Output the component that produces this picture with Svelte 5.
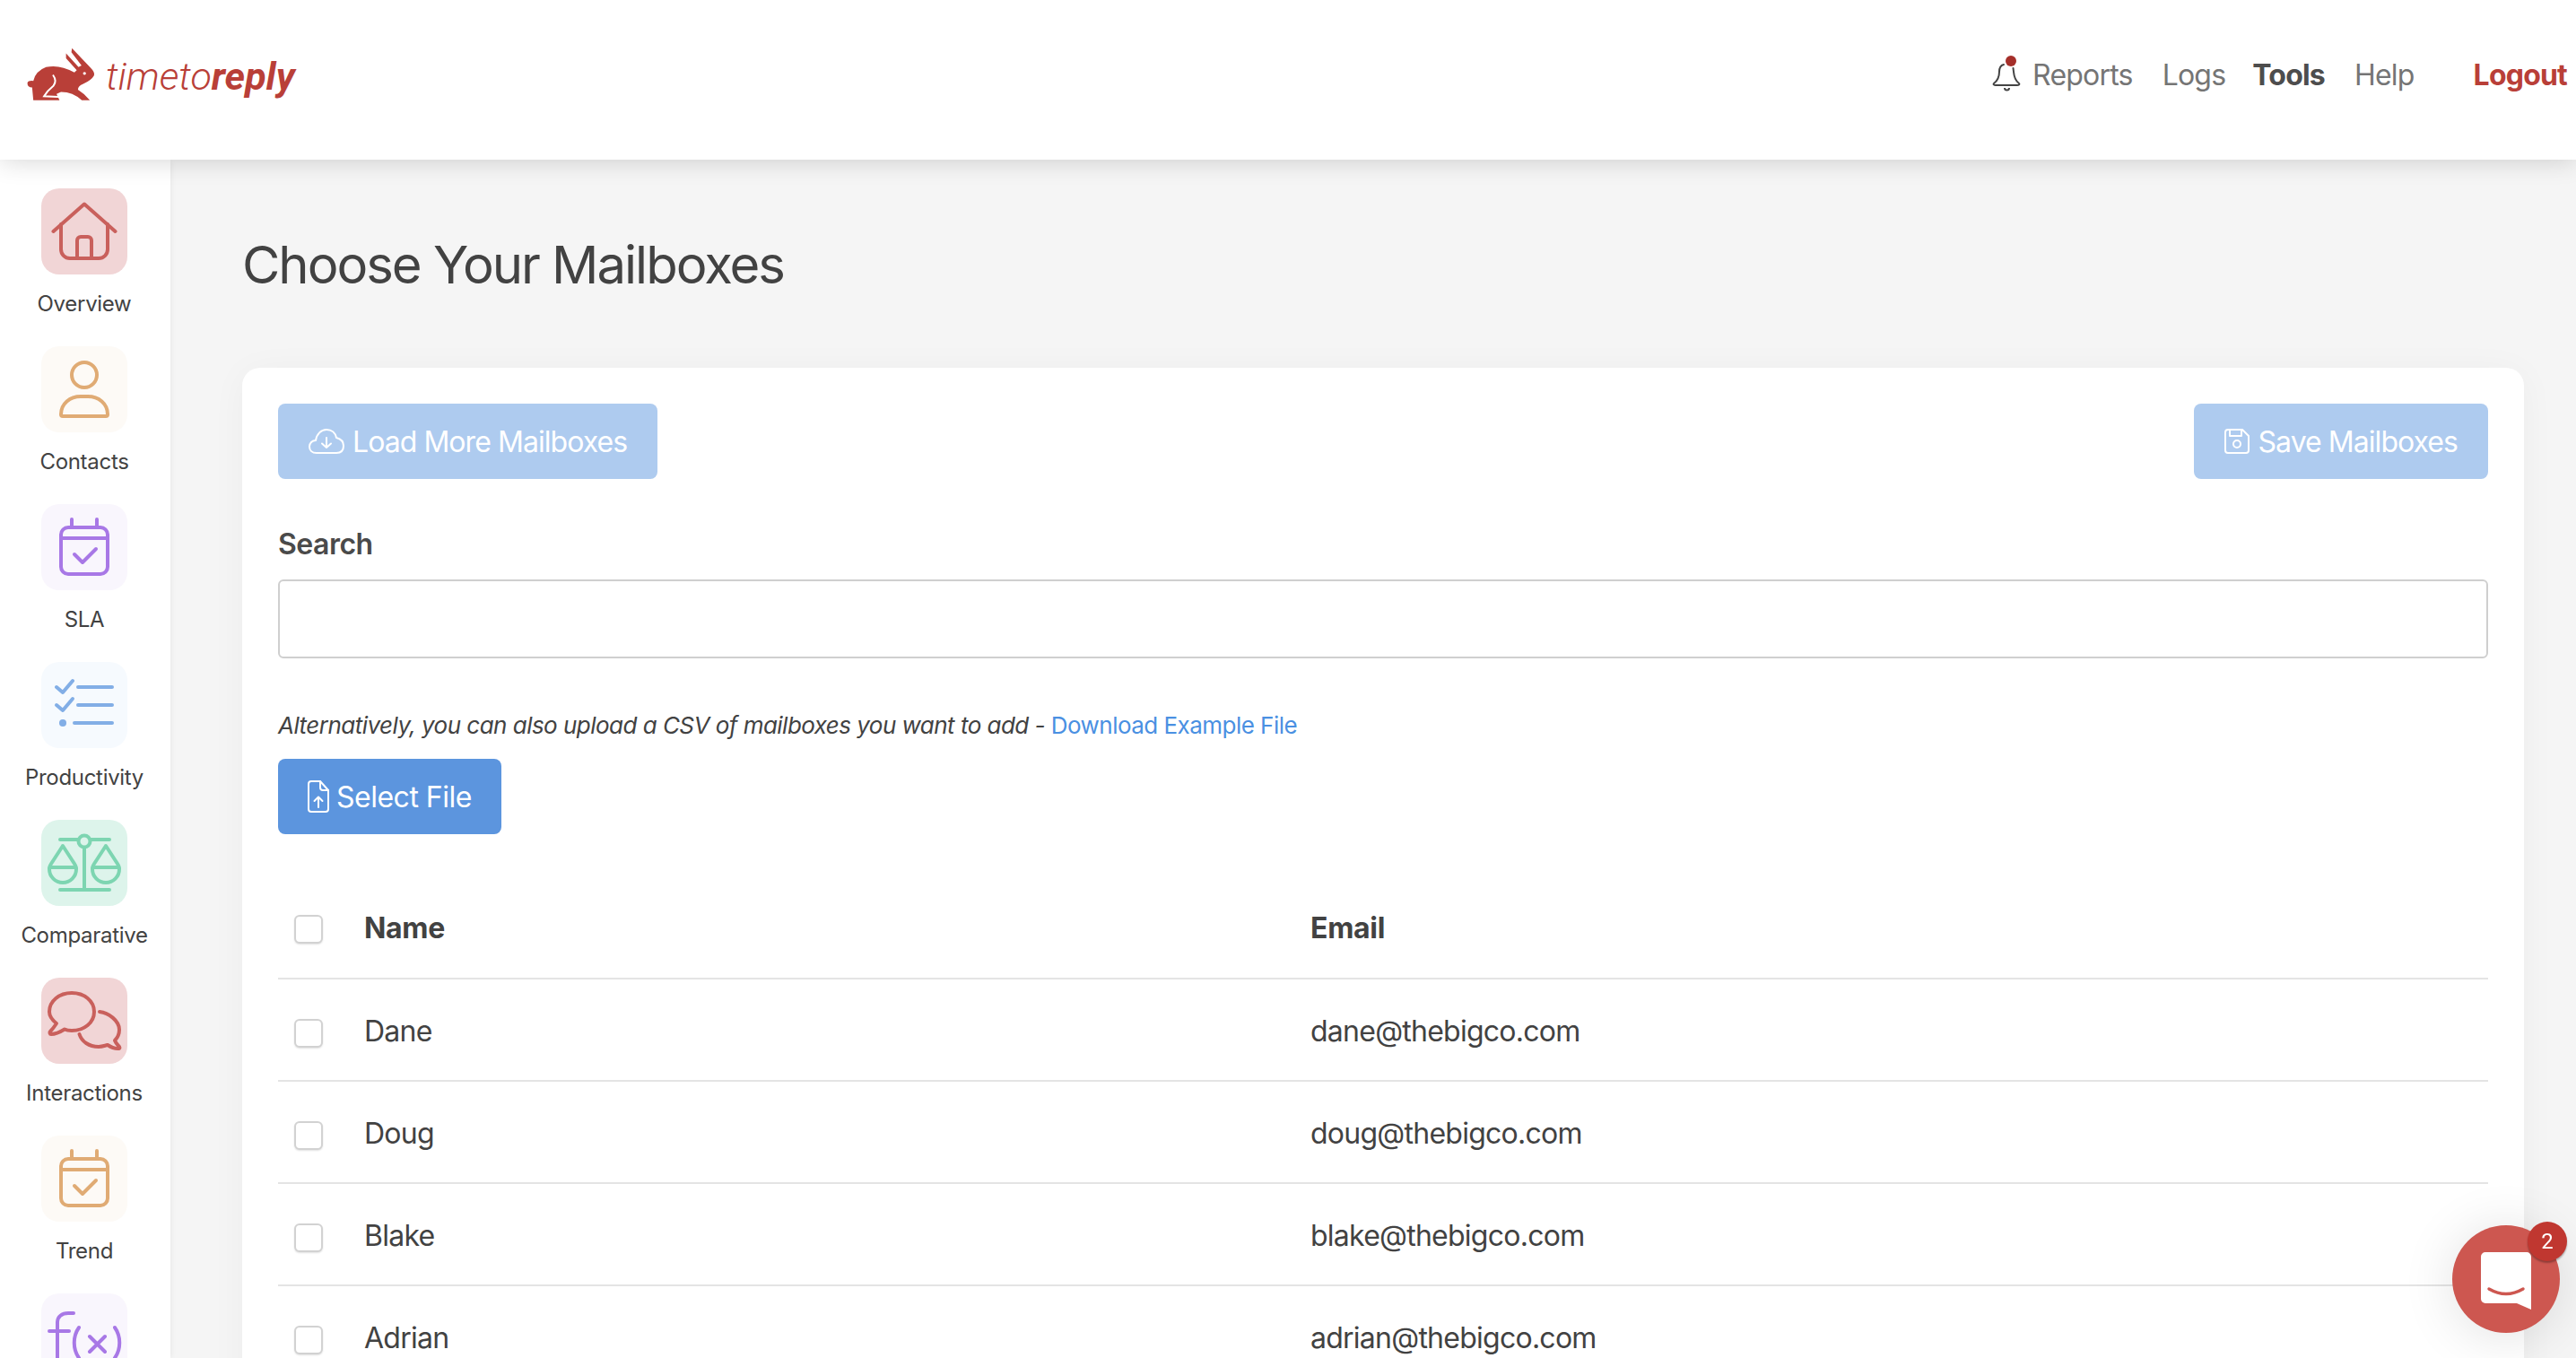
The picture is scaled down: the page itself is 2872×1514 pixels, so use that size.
<script>
	const sideItems = [
		{ label: "Overview", icon: "home", tone: "red" },
		{ label: "Contacts", icon: "person", tone: "orange" },
		{ label: "SLA", icon: "calendar", tone: "purple" },
		{ label: "Productivity", icon: "list", tone: "blue" },
		{ label: "Comparative", icon: "scale", tone: "green" },
		{ label: "Interactions", icon: "chat", tone: "red" },
		{ label: "Trend", icon: "calendar", tone: "orange" },
		// label of this one sits below the fold
		{ label: "", icon: "fx", tone: "purple" },
	];

	const mailboxes = [
		{ name: "Dane", email: "dane@thebigco.com" },
		{ name: "Doug", email: "doug@thebigco.com" },
		{ name: "Blake", email: "blake@thebigco.com" },
		{ name: "Adrian", email: "adrian@thebigco.com" },
	];
</script>

<div class="shell">
	<header class="topbar">
		<a class="logo" href="#top">
			<svg class="rabbit" viewBox="85 150 240 190" width="80" height="63">
				<path fill="#b93f38" d="M92 275 Q95 266 112 268 Q120 235 155 222 Q200 212 250 240 L258 232 L222 192 L222 176 L264 222 L274 216 L240 172 L242 158 L305 225 Q320 240 316 250 Q308 265 280 278 Q262 285 262 298 Q282 310 302 333 L275 333 Q245 305 205 305 L190 312 L200 333 L112 333 L108 290 Q92 290 92 275 Z" />
				<path fill="none" stroke="#fff" stroke-width="6" d="M178 248 Q192 268 180 284 Q160 300 148 320 L196 322" />
				<circle fill="#fff" cx="284" cy="243" r="5" />
			</svg>
			<span class="wordmark">timeto<b>reply</b></span>
		</a>
		<nav class="nav">
			<svg class="bell" viewBox="0 0 34 42" width="34" height="42">
				<path fill="none" stroke="#444" stroke-width="2" stroke-linecap="round" d="M14 12 C10 13 9 16 9 20 C9 26 7 30 3 33 C2 34 3 35 5 35 H29 C31 35 32 34 31 33 C27 30 25.5 26 25 20 L24.5 16" />
				<path fill="none" stroke="#444" stroke-width="2" d="M15 38 a2.5 2.5 0 0 0 5 0" />
				<circle fill="#a52f2a" cx="22" cy="8" r="6" />
			</svg>
			<a class="link reports" href="#top">Reports</a>
			<a class="link" href="#top">Logs</a>
			<a class="link active" href="#top">Tools</a>
			<a class="link" href="#top">Help</a>
			<a class="link logout" href="#top">Logout</a>
		</nav>
	</header>

	<div class="body">
		<aside class="sidebar">
			{#each sideItems as item}
				<a class="side-item" href="#top">
					<span class="side-icon {item.tone}">
						<svg viewBox="0 0 96 96" width="96" height="96" fill="none" stroke="currentColor" stroke-width="4" stroke-linecap="round" stroke-linejoin="round">
							{#if item.icon === "home"}
								<path d="M13.5 48 L48 17.5 L82.5 48" />
								<path d="M22 40 V68 a10 10 0 0 0 10 10 H64 a10 10 0 0 0 10 -10 V40" />
								<path d="M40 78 V58 a4 4 0 0 1 4 -4 h8 a4 4 0 0 1 4 4 V78" />
							{:else if item.icon === "person"}
								<circle cx="48" cy="32" r="14" />
								<path d="M24 78 H72 a2 2 0 0 0 2 -2 C74 64 64 56 52 56 H44 C32 56 22 64 22 76 a2 2 0 0 0 2 2 Z" />
							{:else if item.icon === "calendar"}
								<rect x="22" y="26" width="52" height="52" rx="8" />
								<path d="M22 38 H74 M34 17 V26 M62 17 V26" />
								<path d="M37 56 L46 65 L61 50" />
							{:else if item.icon === "list"}
								<path d="M17 28 L24 34 L35 21 M41 28 H79" />
								<path d="M17 48 L24 54 L35 41 M41 48 H79" />
								<path d="M37 68 H79" />
								<circle cx="24" cy="68" r="4" fill="currentColor" stroke="none" />
							{:else if item.icon === "scale"}
								<path d="M21 22 H41 M55 22 H76 M48 31 V78 M21 78 H76" />
								<circle cx="48" cy="24" r="6.5" />
								<path d="M24 29 L11 49 Q8.5 53 9 55 A15 15 0 0 0 39 55 Q39.5 53 37 49 Z M9.5 53 H38.5" />
								<path d="M72 29 L59 49 Q56.5 53 57 55 A15 15 0 0 0 87 55 Q87.5 53 85 49 Z M57.5 53 H86.5" />
							{:else if item.icon === "chat"}
								<path d="M34 17 C48 17 59 26 59 38 C59 50 48 59 34 59 C31 59 28 58.5 26 57.5 C22 60 15 63 11 63 C9.5 63 9 61 10 60 C12 58 15 54 17 51 C12 47 9 43 9 38 C9 26 20 17 34 17 Z" />
								<path d="M65 38 C75 39 87 48 87 58 C87 63 85 67 82 70 C83 73 85 75 87 77 C88 79 87 79 85 79 C81 79 77 77 74 75 C70 76 68 77 64 77 C53 77 45 71 42.5 63" />
							{:else if item.icon === "fx"}
								<path d="M36 22 H30 C23 22 18 26 18 32 V76 C18 84 14 88 9 88 M9 42 H31" />
								<path d="M42 38 C35 48 35 62 42 72 M82 38 C89 48 89 62 82 72 M54 48 L71 65 M71 48 L54 65" />
							{/if}
						</svg>
					</span>
					{#if item.label}
						<span class="side-label">{item.label}</span>
					{/if}
				</a>
			{/each}
		</aside>

		<main class="main">
			<h1 class="title">Choose Your Mailboxes</h1>
			<section class="card">
				<div class="actions">
					<button class="btn faded">
						<svg viewBox="0 0 40 28" width="40" height="28" fill="none" stroke="#fff" stroke-width="2" stroke-linecap="round" stroke-linejoin="round">
							<path d="M9 27 C4 27 1 24 1 20 C1 16 4 13 8 13 C9 6 14 1 20 1 C26 1 30 5 31 10 C35 11 39 14 39 19 C39 24 36 27 31 27 Z" />
							<path d="M20 10 V21 M15 16.5 L20 21 L25 16.5" />
						</svg>
						Load More Mailboxes
					</button>
					<button class="btn faded save">
						<svg viewBox="0 0 28 28" width="28" height="28" fill="none" stroke="#fff" stroke-width="2" stroke-linejoin="round">
							<path d="M4 1 H20 L27 8 V24 a3 3 0 0 1 -3 3 H4 a3 3 0 0 1 -3 -3 V4 a3 3 0 0 1 3 -3 Z" />
							<path d="M6 1 V8 H19 V1" />
							<circle cx="14" cy="17" r="4" />
						</svg>
						Save Mailboxes
					</button>
				</div>

				<label class="search-label" for="search">Search</label>
				<input id="search" class="search" type="text" />

				<p class="hint">
					<em>Alternatively, you can also upload a CSV of mailboxes you want to add -&nbsp;</em><a href="#top">Download Example File</a>
				</p>
				<button class="btn select">
					<svg viewBox="0 0 24 36" width="24" height="36" fill="none" stroke="#fff" stroke-width="2" stroke-linecap="round" stroke-linejoin="round">
						<path d="M4 1 H14 L23 11 V32 a3 3 0 0 1 -3 3 H4 a3 3 0 0 1 -3 -3 V4 a3 3 0 0 1 3 -3 Z" />
						<path d="M14 1 V8 a3 3 0 0 0 3 3 H23" />
						<path d="M12 30 V19 M7.5 23 L12 18.5 L16.5 23" />
					</svg>
					Select File
				</button>

				<div class="table">
					<div class="row head">
						<input class="check" type="checkbox" aria-label="Select all" />
						<span>Name</span>
						<span>Email</span>
					</div>
					{#each mailboxes as box}
						<div class="row">
							<input class="check" type="checkbox" aria-label="Select {box.name}" />
							<span>{box.name}</span>
							<span>{box.email}</span>
						</div>
					{/each}
				</div>
			</section>
		</main>
	</div>

	<button class="chat" aria-label="Open chat">
		<svg viewBox="0 0 56 64" width="56" height="64">
			<path fill="#fff" d="M5 0 H51 a5 5 0 0 1 5 5 V64 L40 57 H5 a5 5 0 0 1 -5 -5 V5 a5 5 0 0 1 5 -5 Z" />
			<path fill="none" stroke="#cd5750" stroke-width="3.5" stroke-linecap="round" d="M9 41 Q28 52 47 41" />
		</svg>
		<span class="badge">2</span>
	</button>
</div>

<style>
	:global(body) {
		margin: 0;
		background: #f5f5f5;
	}
	a {
		text-decoration: none;
	}
	.shell {
		height: 1514px;
		overflow: hidden;
		display: flex;
		flex-direction: column;
		font-family: Inter, "Liberation Sans", sans-serif;
		color: #424242;
		background: #f5f5f5;
	}
	.topbar {
		position: relative;
		z-index: 2;
		flex: none;
		height: 178px;
		background: #fff;
		box-shadow: 0 2px 26px rgba(0, 0, 0, 0.16);
		display: flex;
		align-items: center;
		justify-content: space-between;
		padding: 0 10px 0 28px;
	}
	.logo {
		display: flex;
		align-items: center;
		gap: 10px;
		margin-top: -8px;
	}
	.rabbit {
		margin-top: -6px;
	}
	.wordmark {
		font-family: Roboto, sans-serif;
		font-style: italic;
		font-weight: 300;
		font-size: 43px;
		color: #b93f38;
	}
	.wordmark b {
		font-weight: 700;
	}
	.nav {
		display: flex;
		align-items: center;
		font-size: 32px;
		letter-spacing: -0.8px;
		margin-top: -12px;
	}
	.bell {
		margin-top: -4px;
	}
	.link {
		color: #757575;
		margin-left: 33px;
	}
	.reports {
		margin-left: 12px;
	}
	.active {
		color: #4d4d4d;
		font-weight: 700;
		margin-left: 30px;
	}
	.logout {
		color: #b93f38;
		font-weight: 700;
		margin-left: 66px;
	}
	.body {
		flex: 1;
		min-height: 0;
		display: flex;
	}
	.sidebar {
		flex: none;
		width: 190px;
		background: #fff;
		box-shadow: 1px 0 6px rgba(0, 0, 0, 0.06);
		padding: 32px 2px 0 0;
		box-sizing: border-box;
		display: flex;
		flex-direction: column;
		align-items: center;
	}
	.side-item {
		flex: none;
		height: 176px;
		display: flex;
		flex-direction: column;
		align-items: center;
		color: #424242;
		font-size: 24px;
		letter-spacing: -0.3px;
	}
	.side-icon {
		display: block;
		width: 96px;
		height: 96px;
		border-radius: 20px;
		margin-bottom: 19px;
	}
	.side-icon svg {
		display: block;
	}
	.red {
		background: #f1d5d6;
		color: #c9605c;
	}
	.orange {
		background: #fdfaf6;
		color: #e0ab74;
	}
	.purple {
		background: #f9f6fd;
		color: #a878e6;
	}
	.blue {
		background: #f6fafe;
		color: #82aee6;
	}
	.green {
		background: #ddf4eb;
		color: #7dd5b1;
	}
	.side-label {
		white-space: nowrap;
		line-height: 28px;
	}
	.main {
		flex: 1;
		min-width: 0;
		padding: 0 58px 0 80px;
	}
	.title {
		margin: 0;
		padding-top: 82px;
		height: 232px;
		box-sizing: border-box;
		font-size: 58px;
		font-weight: 400;
		letter-spacing: -2px;
		line-height: 70px;
		color: #424242;
	}
	.card {
		background: #fff;
		border-radius: 20px;
		padding: 40px;
		box-shadow: 0 4px 40px rgba(0, 0, 0, 0.04);
	}
	.actions {
		display: flex;
		justify-content: space-between;
	}
	.btn {
		display: flex;
		align-items: center;
		gap: 9px;
		height: 84px;
		padding: 0 34px;
		border: none;
		border-radius: 8px;
		color: #fff;
		font-family: inherit;
		font-size: 32px;
		letter-spacing: -0.95px;
	}
	.faded {
		background: #aecbef;
	}
	.save {
		gap: 10px;
	}
	.select {
		background: #5c95de;
		padding: 0 33px;
		gap: 8px;
		letter-spacing: -0.5px;
	}
	.search-label {
		display: block;
		margin-top: 52px;
		font-size: 32px;
		font-weight: 600;
		letter-spacing: -0.5px;
		line-height: 42px;
		color: #4a4a4a;
	}
	.search {
		display: block;
		width: 100%;
		height: 88px;
		box-sizing: border-box;
		margin-top: 18px;
		border: 2px solid #cfcfcf;
		border-radius: 6px;
		background: #fff;
	}
	.hint {
		margin: 59px 0 21px;
		font-size: 26px;
		letter-spacing: -0.53px;
		line-height: 32px;
		color: #424242;
	}
	.hint a {
		color: #4a90e2;
	}
	.table {
		margin-top: 48px;
		font-size: 32px;
		letter-spacing: -0.75px;
	}
	.row {
		display: grid;
		grid-template-columns: 96px 1055px 1fr;
		align-items: center;
		height: 114px;
		padding-top: 3px;
		box-sizing: border-box;
		border-bottom: 2px solid #e4e4e4;
		color: #424242;
	}
	.row.head {
		padding-top: 0;
		font-weight: 700;
		letter-spacing: -0.3px;
	}
	.check {
		appearance: none;
		width: 32px;
		height: 32px;
		margin: 4px 0 0 18px;
		border: 2px solid #d2d2d2;
		border-radius: 6px;
		background: #fff;
		box-shadow: 0 1px 2px rgba(0, 0, 0, 0.12);
	}
	.chat {
		position: fixed;
		left: 2734px;
		top: 1366px;
		z-index: 3;
		width: 120px;
		height: 120px;
		padding: 0;
		border: none;
		border-radius: 50%;
		background: #cd5750;
		box-shadow: 0 4px 60px rgba(0, 0, 0, 0.12);
		display: flex;
		align-items: center;
		justify-content: center;
	}
	.chat svg {
		margin-top: 4px;
	}
	.badge {
		position: absolute;
		left: 84px;
		top: -4px;
		width: 44px;
		height: 44px;
		border-radius: 50%;
		background: #c03730;
		box-shadow: 0 2px 2px rgba(0, 0, 0, 0.3);
		color: #fff;
		font-family: Roboto, sans-serif;
		font-size: 24px;
		line-height: 44px;
		text-align: center;
	}
</style>
